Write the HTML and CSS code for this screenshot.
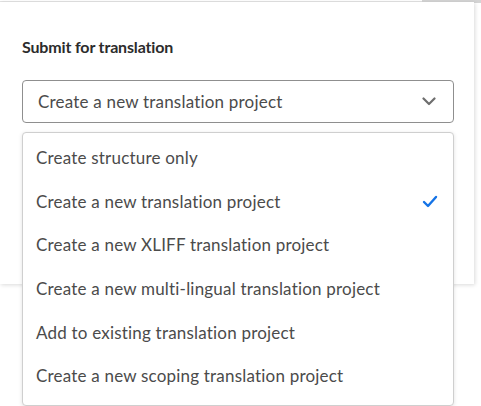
FILE: index.html
```html
<!DOCTYPE html>
<html>
<head>
<meta charset="utf-8">
<link rel="stylesheet" href="styles.css">
</head>
<body>
<div class="page">
  <div class="topline"><div class="topline-dark"></div></div>
  <div class="dialog">
    <h2 class="title">Submit for translation</h2>
    <div class="select">
      <span class="select-value">Create a new translation project</span>
      <svg class="chevron" width="14" height="9" viewBox="0 0 14 9"><path d="M1.5 1.5 L7 7 L12.5 1.5" fill="none" stroke="#6e6e6e" stroke-width="2.2" stroke-linecap="round" stroke-linejoin="round"/></svg>
    </div>
  </div>
  <div class="behind"></div>
  <ul class="menu">
    <li class="item">Create structure only</li>
    <li class="item selected">Create a new translation project
      <svg class="check" width="16" height="13" viewBox="0 0 16 13"><path d="M2 7 L6 11 L14 2" fill="none" stroke="#1473e6" stroke-width="2.4" stroke-linecap="round" stroke-linejoin="round"/></svg>
    </li>
    <li class="item">Create a new XLIFF translation project</li>
    <li class="item">Create a new multi-lingual translation project</li>
    <li class="item">Add to existing translation project</li>
    <li class="item">Create a new scoping translation project</li>
  </ul>
</div>
</body>
</html>
```
FILE: styles.css
```css
html, body {
  margin: 0;
  padding: 0;
  background: #fff;
}
body {
  font-family: Lato, "Open Sans", sans-serif;
  width: 481px;
  height: 406px;
  overflow: hidden;
}
.page {
  position: relative;
  width: 481px;
  height: 406px;
}
.topline {
  height: 1px;
  margin-top: 1px;
  background: #e3e3e3;
  position: relative;
}
.topline-dark {
  position: absolute;
  left: 422px;
  right: 0;
  top: -1px;
  height: 3px;
  background: #d4d4d4;
}
.dialog {
  position: relative;
  z-index: 1;
  width: 474px;
  height: 282px;
  background: #fff;
  box-sizing: border-box;
  padding: 35px 20px 0 22px;
  box-shadow: 1px 1px 4px rgba(0,0,0,0.15);
}
.title {
  margin: 0;
  font-size: 16px;
  letter-spacing: -0.15px;
  font-weight: 700;
  color: #2c2c2c;
  line-height: 20px;
}
.select {
  margin-top: 23px;
  width: 432px;
  height: 43px;
  box-sizing: border-box;
  border: 1px solid #8f8f8f;
  border-radius: 4px;
  display: flex;
  align-items: center;
  justify-content: space-between;
  padding: 0 17px 0 15px;
}
.select-value {
  font-size: 17px;
  letter-spacing: 0.2px;
  color: #4b4b4b;
}
.chevron {
  display: block;
}
.behind {
  width: 422px;
  height: 122px;
  border-right: 1px solid #d6d6d6;
}
.menu {
  position: absolute;
  z-index: 2;
  left: 22px;
  top: 131px;
  width: 432px;
  height: 274px;
  box-sizing: border-box;
  margin: 0;
  padding: 3px 0;
  list-style: none;
  background: #fff;
  border: 1px solid #cfcfcf;
  border-radius: 4px;
  box-shadow: 0 1px 4px rgba(0,0,0,0.12);
  display: flex;
  flex-direction: column;
}
.item {
  height: 43.6px;
  flex: none;
  display: flex;
  align-items: center;
  justify-content: space-between;
  padding: 0 15px 0 13px;
  font-size: 17px;
  letter-spacing: 0.2px;
  color: #4b4b4b;
}
.check {
  display: block;
}
```
